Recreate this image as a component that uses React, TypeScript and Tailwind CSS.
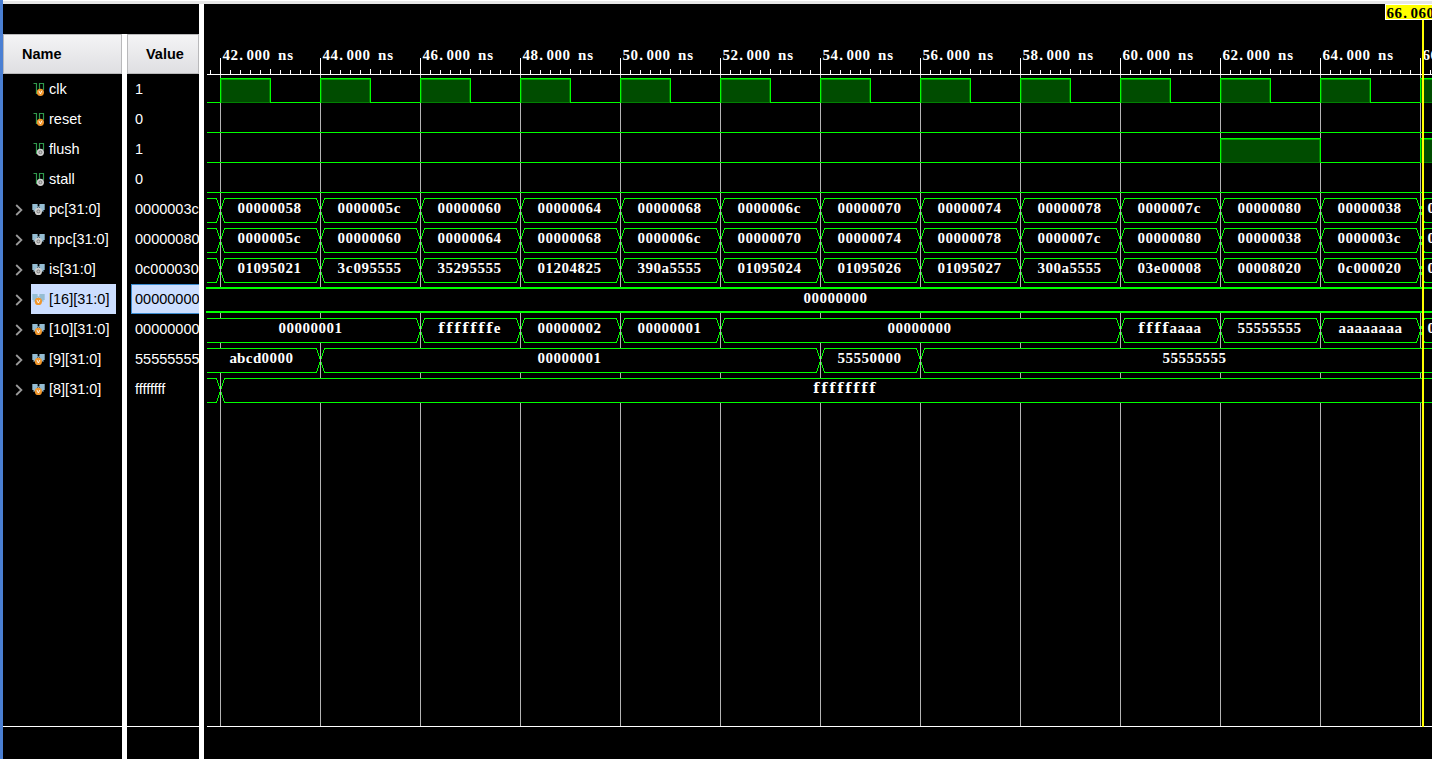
import React from "react";

type IconKind = "scalar" | "bus";
type Badge = "orange" | "gray";
type Signal = { name: string; value: string; kind: IconKind; badge: Badge; selected?: boolean };

const SIGNALS: Signal[] = [
  { name: "clk", value: "1", kind: "scalar", badge: "orange" },
  { name: "reset", value: "0", kind: "scalar", badge: "orange" },
  { name: "flush", value: "1", kind: "scalar", badge: "gray" },
  { name: "stall", value: "0", kind: "scalar", badge: "gray" },
  { name: "pc[31:0]", value: "0000003c", kind: "bus", badge: "gray" },
  { name: "npc[31:0]", value: "00000080", kind: "bus", badge: "gray" },
  { name: "is[31:0]", value: "0c000030", kind: "bus", badge: "gray" },
  { name: "[16][31:0]", value: "00000000", kind: "bus", badge: "orange", selected: true },
  { name: "[10][31:0]", value: "00000000", kind: "bus", badge: "orange" },
  { name: "[9][31:0]", value: "55555555", kind: "bus", badge: "orange" },
  { name: "[8][31:0]", value: "ffffffff", kind: "bus", badge: "orange" },
];

function BadgeMark({ badge, cx, cy }: { badge: Badge; cx: number; cy: number }) {
  if (badge === "orange") {
    return (
      <g>
        <circle cx={cx} cy={cy} r="3.6" fill="#f0962c" />
        <path d={`M${cx - 1.5} ${cy - 1.5}L${cx} ${cy + 1.6}L${cx + 1.5} ${cy - 1.5}`} fill="none" stroke="#fff" strokeWidth="0.9" />
      </g>
    );
  }
  return (
    <g>
      <circle cx={cx} cy={cy} r="3.6" fill="#cfcfcf" />
      <circle cx={cx} cy={cy} r="1.5" fill="#c4c4c4" stroke="#6f6f6f" strokeWidth="0.8" />
    </g>
  );
}

function SignalIcon({ kind, badge }: { kind: IconKind; badge: Badge }) {
  return (
    <svg width="14" height="14" viewBox="0 0 14 14" className="shrink-0">
      {kind === "scalar" ? (
        <>
          <path d="M1.500 1.500H4.500V11.500H7.500V1.500H11.500V8" fill="none" stroke="#2f9a4c" strokeWidth="1.2" />
          <BadgeMark badge={badge} cx={8.4} cy={10.3} />
        </>
      ) : (
        <>
          <path d="M.3 2H5.600V5L4 9.600H1L1.800 8H.3Z" fill="#94bdd3" />
          <path d="M7.400 2H12.700V8H11.200L12 9.600H9L7.400 5Z" fill="#94bdd3" />
          <path d="M5.600 4L6.500 6L7.400 4" fill="none" stroke="#94bdd3" />
          <BadgeMark badge={badge} cx={6.4} cy={9.4} />
        </>
      )}
    </svg>
  );
}

function SignalRow({ signal }: { signal: Signal }) {
  return (
    <div className="flex h-[30px] items-center pl-[11px]">
      <div className="flex w-[17px] shrink-0 items-center">
        {signal.kind === "bus" && (
          <svg width="9" height="12" viewBox="0 0 9 12" className="mt-[2px]">
            <path d="M2.200 1L7.400 6L2.200 11" fill="none" stroke="#9a9a9a" strokeWidth="1.8" />
          </svg>
        )}
      </div>
      <div className={signal.selected ? "flex h-[30px] w-[85px] items-center bg-[#ccdeff] pl-px text-black" : "flex h-[30px] w-[85px] items-center pl-px text-white"}>
        <SignalIcon kind={signal.kind} badge={signal.badge} />
        <span className="ml-[3px] whitespace-nowrap">{signal.name}</span>
      </div>
    </div>
  );
}

const TRACK_START = 3;
const X0 = 204;
const GRID = [220, 320, 420, 520, 620, 720, 820, 920, 1020, 1120, 1220, 1320, 1420].map((x) => x - X0);
const MINOR = Array.from({ length: 123 }, (_, i) => 210 + i * 10 - X0).filter((x) => x < 1228);

type Segment = { from: number; to: number; text: string; at: number };

function even(words: string[]): Segment[] {
  const cells = words.map((text, i) => ({ from: 220 + i * 100, to: 320 + i * 100, text, at: 237 + i * 100 }));
  return [{ from: 0, to: 220, text: "", at: 0 }, ...cells, { from: 1420, to: 1600, text: "0", at: 1427 }];
}

const BUSES: { top: number; segments: Segment[] }[] = [
  { top: 198, segments: even(["00000058", "0000005c", "00000060", "00000064", "00000068", "0000006c", "00000070", "00000074", "00000078", "0000007c", "00000080", "00000038"]) },
  { top: 228, segments: even(["0000005c", "00000060", "00000064", "00000068", "0000006c", "00000070", "00000074", "00000078", "0000007c", "00000080", "00000038", "0000003c"]) },
  { top: 258, segments: even(["01095021", "3c095555", "35295555", "01204825", "390a5555", "01095024", "01095026", "01095027", "300a5555", "03e00008", "00008020", "0c000020"]) },
  {
    top: 318,
    segments: [
      { from: 0, to: 420, text: "00000001", at: 278 },
      { from: 420, to: 520, text: "fffffffe", at: 437 },
      { from: 520, to: 620, text: "00000002", at: 537 },
      { from: 620, to: 720, text: "00000001", at: 637 },
      { from: 720, to: 1120, text: "00000000", at: 887 },
      { from: 1120, to: 1220, text: "ffffaaaa", at: 1137 },
      { from: 1220, to: 1320, text: "55555555", at: 1237 },
      { from: 1320, to: 1420, text: "aaaaaaaa", at: 1338 },
      { from: 1420, to: 1600, text: "0", at: 1427 },
    ],
  },
  {
    top: 348,
    segments: [
      { from: 0, to: 320, text: "abcd0000", at: 229 },
      { from: 320, to: 820, text: "00000001", at: 537 },
      { from: 820, to: 920, text: "55550000", at: 837 },
      { from: 920, to: 1600, text: "55555555", at: 1162 },
    ],
  },
  {
    top: 378,
    segments: [
      { from: 0, to: 220, text: "", at: 0 },
      { from: 220, to: 1600, text: "ffffffff", at: 812 },
    ],
  },
];

/* Fixed-pitch lettering: every glyph is centred in an 8px cell. */
function CellText({ x, y, text, fill = "#fff" }: { x: number; y: number; text: string; fill?: string }) {
  const xs = Array.from(text, (c, i) => x + i * 8 + (c === "." ? 3.2 : 4.2)).join(" ");
  return (
    <text x={xs} y={y} textAnchor="middle" fill={fill} className="font-['Liberation_Serif',serif] text-[15px] font-bold">
      {text.split(/(f+)/).filter(Boolean).map((run, i) =>
        run[0] === "f" ? (
          <tspan key={i} className="font-['DejaVu_Serif',serif] text-[14px]">
            {run}
          </tspan>
        ) : (
          run
        ),
      )}
    </text>
  );
}

function BusTrack({ top, segments }: { top: number; segments: Segment[] }) {
  const t = top - 4 + 0.5;
  const m = t + 12;
  const b = t + 24;
  return (
    <g>
      {segments.map((s) => {
        const l = s.from - X0 + 0.5;
        const r = s.to - X0 + 0.5;
        return (
          <path
            key={s.from}
            d={`M${l} ${m}L${l + 4} ${t}H${r - 4}L${r} ${m}L${r - 4} ${b}H${l + 4}Z`}
            fill="#000"
            stroke="#00ff00"
            shapeRendering="crispEdges"
          />
        );
      })}
      {segments.slice(1).map((s) => (
        <rect key={s.from} x={s.from - X0} y={m - 2.5} width="1" height="4" fill="#b4b4b4" />
      ))}
      {segments.filter((s) => s.text).map((s) => (
        <CellText key={s.from} x={s.at - X0} y={top - 4 + 15} text={s.text} />
      ))}
    </g>
  );
}

function Pulse({ from, to, top }: { from: number; to: number; top: number }) {
  const x = from - X0;
  const y = top - 4;
  const w = to - from;
  return (
    <g shapeRendering="crispEdges">
      <rect x={x} y={y} width={w + 1} height="25" fill="#008000" />
      <rect x={x + 1} y={y + 1} width={w - 1} height="1" fill="#00a800" />
      <rect x={x + 2} y={y + 2} width={w - 3} height="22" fill="#004c00" />
      <path d={`M${x + 0.5} ${y + 25}V${y + 0.5}H${x + w + 0.5}V${y + 25}`} fill="none" stroke="#00ff00" />
    </g>
  );
}

function BaseLine({ y, from, to }: { y: number; from: number; to: number }) {
  return <rect x={from - X0} y={y - 4} width={to - from} height="1" fill="#00ff00" />;
}

function Waveform() {
  return (
    <svg width="1228" height="755" viewBox="0 0 1228 755" className="block bg-black">
      <g shapeRendering="crispEdges">
        {GRID.map((x) => (
          <rect key={x} x={x} y="71" width="1" height="651" fill="#b4b4b4" />
        ))}
        <rect x={TRACK_START} y="70" width="1225" height="1" fill="#fff" />
        <rect x={TRACK_START} y="722" width="1225" height="1" fill="#fff" />
        {MINOR.map((x) => {
          const offset = (x + X0 - 220) % 100;
          const h = offset === 0 ? 16 : offset === 50 ? 5 : 4;
          return <rect key={x} x={x} y={70 - h} width="1" height={h} fill="#fff" />;
        })}
      </g>
      {GRID.map((x, i) => (
        <CellText key={x} x={x + 2} y={56} text={`${42 + i * 2}.000 ns`} />
      ))}
      {GRID.map((x) => (
        <g key={x}>
          <BaseLine y={102} from={x + X0 + 50} to={x + X0 + 100} />
          <Pulse from={x + X0} to={x + X0 + 50} top={78} />
        </g>
      ))}
      <BaseLine y={102} from={207} to={220} />
      <BaseLine y={132} from={207} to={1432} />
      <BaseLine y={162} from={207} to={1220} />
      <BaseLine y={162} from={1320} to={1420} />
      <Pulse from={1220} to={1320} top={138} />
      <Pulse from={1420} to={1520} top={138} />
      <BaseLine y={192} from={207} to={1432} />
      {BUSES.map((bus) => (
        <BusTrack key={bus.top} top={bus.top} segments={bus.segments} />
      ))}
      <rect x="0" y="75" width="3" height="640" fill="#000" />
      <rect x="2" y="283" width="1226" height="26" fill="#00ff00" />
      <rect x="2" y="285" width="1226" height="22" fill="#000" />
      <CellText x={803 - X0} y={299} text="00000000" />
      <rect x="1181" y="0" width="47" height="16" fill="#fff" />
      <rect x="1182" y="1" width="46" height="14" fill="#ffff00" />
      <CellText x={1182} y={14} text="66.060" fill="#000" />
      <rect x="1218" y="16" width="2" height="707" fill="#ffff00" />
    </svg>
  );
}

function HeaderCell({ label, className }: { label: string; className: string }) {
  return (
    <div className={`flex h-10 items-center border border-[#b9b9bb] bg-linear-to-b from-[#f4f4f5] to-[#dfdfe2] font-bold text-black ${className}`}>
      {label}
    </div>
  );
}

export default function App() {
  return (
    <div className="flex h-[759px] w-[1432px] overflow-hidden bg-white font-['Liberation_Sans',sans-serif] text-[14.5px] leading-none">
      <div className="w-[3px] shrink-0 bg-[#4a7fd3]" />
      <div className="flex min-w-0 flex-1 flex-col">
        <div className="h-1 shrink-0 border-t border-white bg-[#e6e6e6]" />
        <div className="flex flex-1">
          <div className="flex w-[196px] shrink-0 flex-col">
            <div className="h-[30px] shrink-0 bg-black" />
            <div className="flex flex-1 gap-[5px]">
              <div className="flex w-[119px] flex-col bg-black">
                <HeaderCell label="Name" className="pl-[18px]" />
                <div className="flex h-[652px] flex-col">
                  {SIGNALS.map((s) => (
                    <SignalRow key={s.name} signal={s} />
                  ))}
                </div>
                <div className="h-px bg-white" />
              </div>
              <div className="flex w-[72px] flex-col overflow-hidden bg-black">
                <HeaderCell label="Value" className="pl-[18px]" />
                <div className="flex h-[652px] flex-col pl-1">
                  {SIGNALS.map((s) => (
                    <div
                      key={s.name}
                      className={
                        s.selected
                          ? "flex h-[30px] shrink-0 items-center border border-r-0 border-[#3c8cd0] bg-[#ccdeff] pl-[3px] text-black"
                          : "flex h-[30px] shrink-0 items-center pl-1 text-white"
                      }
                    >
                      {s.value}
                    </div>
                  ))}
                </div>
                <div className="h-px bg-white" />
              </div>
            </div>
          </div>
          <div className="w-[5px] shrink-0 bg-white" />
          <Waveform />
        </div>
      </div>
    </div>
  );
}
